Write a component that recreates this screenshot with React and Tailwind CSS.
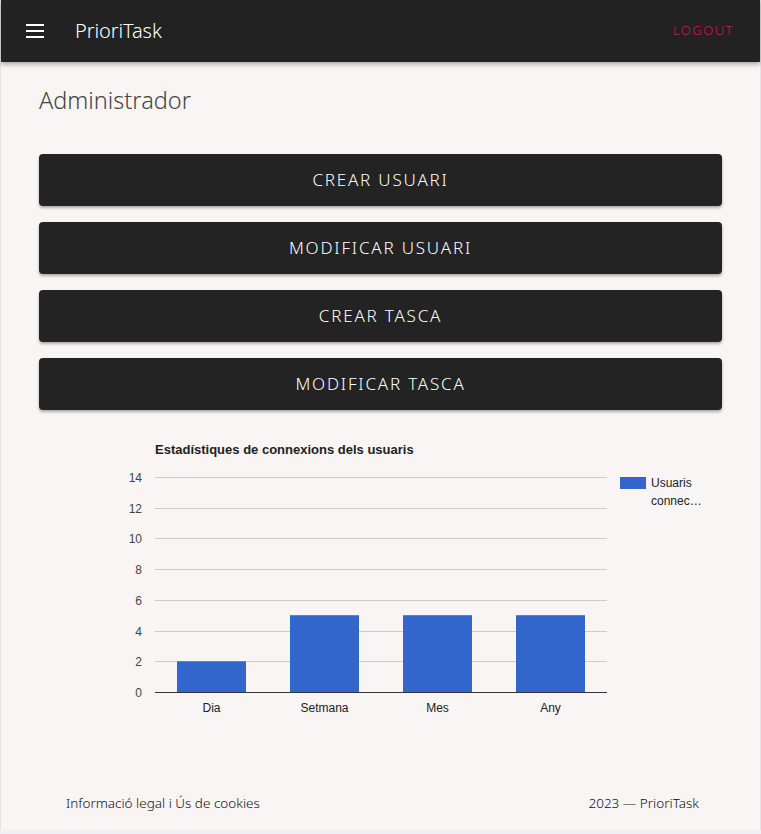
import React from 'react';

// --- Chart data ---
const stats = [
    { label: 'Dia', value: 2 },
    { label: 'Setmana', value: 5 },
    { label: 'Mes', value: 5 },
    { label: 'Any', value: 5 },
];

const buttons = ['Crear usuari', 'Modificar usuari', 'Crear tasca', 'Modificar tasca'];

// chart geometry (svg coords)
const PLOT_LEFT = 116;
const PLOT_RIGHT = 568;
const PLOT_TOP = 47;
const PLOT_BOTTOM = 262;
const MAX = 14;
const yOf = (v) => PLOT_BOTTOM - (v / MAX) * (PLOT_BOTTOM - PLOT_TOP);

const StatsChart = () => {
    const slot = (PLOT_RIGHT - PLOT_LEFT) / stats.length;
    const barW = 69;
    return (
        <svg width="683" height="300" className="block" style={{ fontFamily: '"Liberation Sans", Arial, sans-serif' }}>
            <text x={PLOT_LEFT} y={24} fontSize="13" fontWeight="bold" fill="#222">
                Estadístiques de connexions dels usuaris
            </text>
            {[0, 2, 4, 6, 8, 10, 12, 14].map((v) => (
                <g key={v}>
                    {v !== 0 && (
                        <line x1={PLOT_LEFT} x2={PLOT_RIGHT} y1={Math.round(yOf(v)) + 0.5} y2={Math.round(yOf(v)) + 0.5} stroke="#cccccc" />
                    )}
                    <text x={PLOT_LEFT - 13} y={Math.round(yOf(v)) + 4.5} fontSize="12" fill="#444" textAnchor="end">
                        {v}
                    </text>
                </g>
            ))}
            {stats.map((s, i) => {
                const cx = PLOT_LEFT + slot * (i + 0.5);
                const top = yOf(s.value);
                return (
                    <g key={s.label}>
                        <rect x={cx - barW / 2} y={top} width={barW} height={PLOT_BOTTOM - top} fill="#3366cc" />
                        <text x={cx} y={PLOT_BOTTOM + 20} fontSize="12" fill="#222" textAnchor="middle">
                            {s.label}
                        </text>
                    </g>
                );
            })}
            <line x1={PLOT_LEFT} x2={PLOT_RIGHT} y1={PLOT_BOTTOM + 0.5} y2={PLOT_BOTTOM + 0.5} stroke="#333" />
            {/* legend */}
            <rect x={581} y={47} width={26} height={12} fill="#3366cc" />
            <text x={612} y={57} fontSize="12" fill="#222">Usuaris</text>
            <text x={612} y={75} fontSize="12" fill="#222">connec…</text>
        </svg>
    );
};

const App = () => {
    return (
        <div className="bg-[#eef0f2] min-h-[834px]" style={{ fontFamily: '"Noto Sans", "Open Sans", sans-serif' }}>
            <div className="h-[830px] bg-[#f8f5f4] border-x border-[#e4e4e4] flex flex-col">
                {/* --- Header --- */}
                <header className="h-[62px] shrink-0 bg-[#222222] flex items-center pl-[25px] pr-[26px] shadow-[0_2px_5px_rgba(0,0,0,0.35)] relative z-10">
                    <svg width="18" height="14" viewBox="0 0 18 14" className="mr-[31px]">
                        <rect x="0" y="0" width="18" height="2" fill="#fff" />
                        <rect x="0" y="6" width="18" height="2" fill="#fff" />
                        <rect x="0" y="12" width="18" height="2" fill="#fff" />
                    </svg>
                    <span className="text-white text-[20px] font-light tracking-[-0.1px]">PrioriTask</span>
                    <span className="ml-auto text-[#c8185a] text-[13px] font-light tracking-[1.5px]">LOGOUT</span>
                </header>

                {/* --- Content --- */}
                <main className="flex-1 px-[38px]">
                    <h1 className="mt-[22px] text-[23.5px] leading-8 font-light text-[#444]">Administrador</h1>
                    <div className="mt-[38px] flex flex-col gap-4">
                        {buttons.map((b) => (
                            <button
                                key={b}
                                className="h-[52px] w-full rounded bg-[#232323] text-white uppercase text-[17px] font-light tracking-[1.8px] shadow-[0_2px_3px_rgba(0,0,0,0.3)]"
                            >
                                {b}
                            </button>
                        ))}
                    </div>
                    <div className="mt-5">
                        <StatsChart />
                    </div>
                </main>

                {/* --- Footer --- */}
                <footer className="h-[54px] shrink-0 flex items-center justify-between pl-[65px] pr-[61px] text-[13.5px] text-[#111] font-light">
                    <span>Informació legal i Ús de cookies</span>
                    <span>2023 — PrioriTask</span>
                </footer>
            </div>
        </div>
    );
};

export default App;
